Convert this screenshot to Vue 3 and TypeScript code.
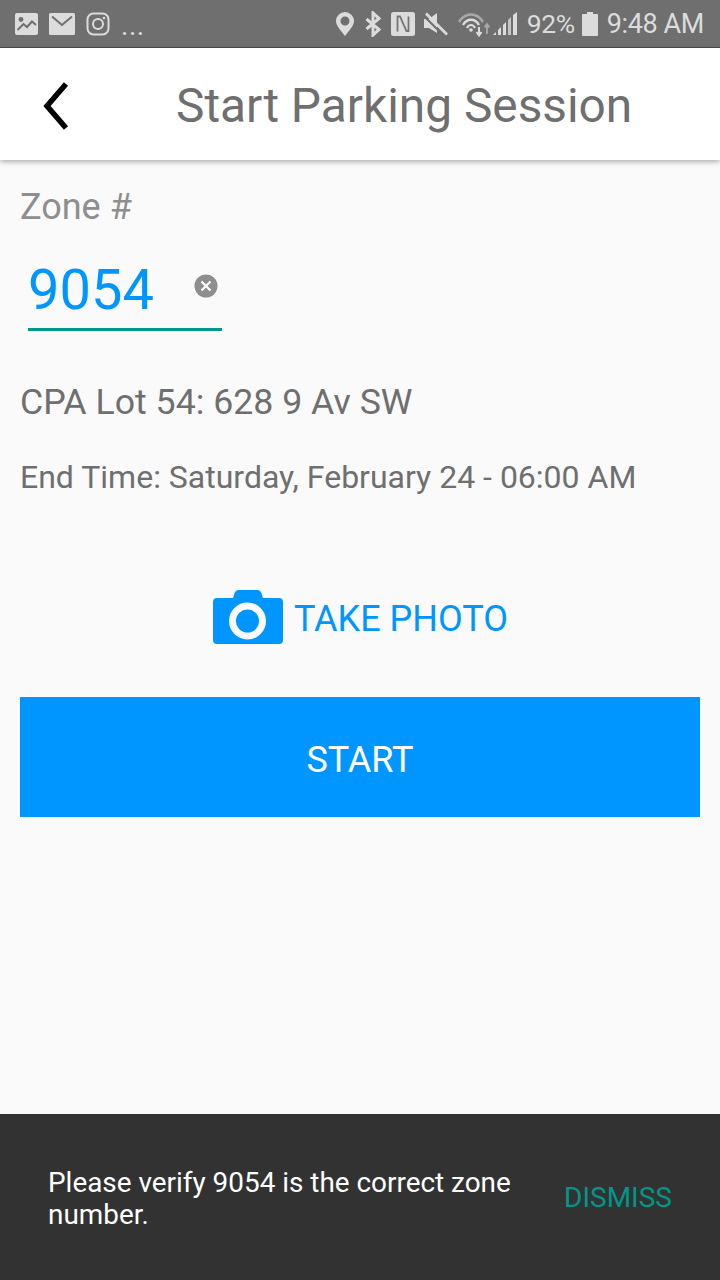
<template>
  <div class="screen">
    <div class="status-bar">
      <div class="status-left">
        <svg class="ic-img" width="26" height="24" viewBox="0 0 26 24">
          <rect x="1" y="1" width="23" height="22" rx="2" fill="#dcdcdc" />
          <circle cx="7" cy="7.500" r="2.400" fill="#6f6f6f" />
          <path d="M3.500 18 L9.500 12 L13 15 L18 9.500 L22 13" fill="none" stroke="#6f6f6f" stroke-width="2" />
        </svg>
        <svg class="ic-mail" width="27" height="24" viewBox="0 0 27 24">
          <rect x="1" y="1" width="26" height="22" rx="1.500" fill="#dcdcdc" />
          <path d="M4 4.500 L14 13 L24 4.500" fill="none" stroke="#6f6f6f" stroke-width="2" />
        </svg>
        <svg class="ic-insta" width="24" height="24" viewBox="0 0 24 24">
          <rect x="1.500" y="1.500" width="21" height="21" rx="6" fill="none" stroke="#dcdcdc" stroke-width="2" />
          <circle cx="12" cy="12" r="5" fill="none" stroke="#dcdcdc" stroke-width="2" />
          <circle cx="18" cy="6" r="1.300" fill="#dcdcdc" />
        </svg>
        <span class="dots">...</span>
      </div>
      <div class="status-right">
        <svg class="ic-pin" width="18" height="24" viewBox="0 0 18 24">
          <path fill-rule="evenodd" d="M9 0a9 9 0 0 1 9 9c0 5-5.500 10-9 15-3.500-5-9-10-9-15a9 9 0 0 1 9-9zm0 4.500a4.500 4.500 0 1 0 0 9 4.500 4.500 0 0 0 0-9z" fill="#dcdcdc" />
        </svg>
        <svg class="ic-bt" width="18" height="26" viewBox="0 0 18 26">
          <path d="M2.500 8 L15 18.500 L9 24 V2 L15 7.500 L2.500 18" fill="none" stroke="#dcdcdc" stroke-width="3" />
        </svg>
        <svg class="ic-nfc" width="24" height="24" viewBox="0 0 24 24">
          <rect x="0" y="0" width="24" height="24" rx="2.500" fill="#dcdcdc" />
          <path d="M6.500 19.500 V4.500 H9 L15.500 19 H17.500 V4.500" fill="none" stroke="#757575" stroke-width="1.800" />
        </svg>
        <svg class="ic-mute" width="24" height="24" viewBox="0 0 24 24">
          <path d="M0 7 H5 L13 1 V21 L5 16 H0 Z" fill="#dcdcdc" />
          <path d="M0 4 L19 23" stroke="#6f6f6f" stroke-width="2" />
          <path d="M2 1.500 L23 22.500" stroke="#dcdcdc" stroke-width="2.600" />
        </svg>
        <svg class="ic-wifi" width="32" height="26" viewBox="0 0 32 26">
          <path d="M1 11 C7 1 19 1 25 11" fill="none" stroke="#a9a9a9" stroke-width="2.600" />
          <path d="M5 14 C9 7 17 7 21 14" fill="none" stroke="#dcdcdc" stroke-width="2.400" />
          <path d="M9 17 C11 13 15 13 17 17" fill="none" stroke="#dcdcdc" stroke-width="2.200" />
          <circle cx="13" cy="19" r="1.800" fill="#dcdcdc" />
          <path d="M21 16 V24 M18.500 21 L21 24.500 L23.500 21" fill="none" stroke="#dcdcdc" stroke-width="2" />
          <path d="M29 23 V14 M26.500 16.500 L29 13 L31.500 16.500" fill="none" stroke="#a9a9a9" stroke-width="1.800" />
        </svg>
        <svg class="ic-signal" width="25" height="24" viewBox="0 0 25 24">
          <path d="M0 23 L3 20 V23 Z" fill="#dcdcdc" />
          <path d="M5 18 L8 15 V23 H5 Z" fill="#dcdcdc" />
          <path d="M10 13 L13 10 V23 H10 Z" fill="#dcdcdc" />
          <path d="M15 8 L18 5 V23 H15 Z" fill="#c4c4c4" />
          <path d="M20 3 L24 0 V23 H20 Z" fill="#dcdcdc" />
        </svg>
        <span class="pct">92%</span>
        <svg class="ic-batt" width="16" height="24" viewBox="0 0 16 24">
          <path d="M5 0 H11 V2 H15 a1 1 0 0 1 1 1 V23 a1 1 0 0 1-1 1 H1 a1 1 0 0 1-1-1 V3 a1 1 0 0 1 1-1 H5 Z" fill="#dcdcdc" />
        </svg>
        <span class="time">9:48 AM</span>
      </div>
    </div>

    <header class="app-bar">
      <svg class="back" width="30" height="50" viewBox="0 0 30 50">
        <path d="M26 3 L7 25 L26 47" fill="none" stroke="#000" stroke-width="5.500" />
      </svg>
      <h1 class="title">Start Parking Session</h1>
    </header>

    <main class="content">
      <div class="zone-label">Zone #</div>
      <div class="zone-input">
        <span class="zone-value">9054</span>
        <svg class="clear" width="24" height="24" viewBox="0 0 24 24">
          <circle cx="12" cy="12" r="11.500" fill="#8e8e8e" />
          <path d="M7.500 7.500 L16.500 16.500 M16.500 7.500 L7.500 16.500" stroke="#fff" stroke-width="2.200" />
        </svg>
      </div>
      <div class="lot">CPA Lot 54: 628 9 Av SW</div>
      <div class="end-time">End Time: Saturday, February 24 - 06:00 AM</div>
      <div class="photo">
        <svg width="72" height="56" viewBox="0 0 72 56">
          <path d="M22 6 Q23 1 27 1 H45 Q49 1 50 6 L51 9 H67 Q71 9 71 13 V51 Q71 55 67 55 H5 Q1 55 1 51 V13 Q1 9 5 9 H21 Z" fill="#0096ff" />
          <circle cx="35.500" cy="32" r="15" fill="#0096ff" stroke="#fafafa" stroke-width="7" />
        </svg>
        <span class="photo-text">TAKE PHOTO</span>
      </div>
      <button class="start">START</button>
    </main>

    <footer class="snackbar">
      <p class="snack-text">Please verify 9054 is the correct zone number.</p>
      <span class="dismiss">DISMISS</span>
    </footer>
  </div>
</template>

<script setup lang="ts">
</script>

<style>
html, body { margin: 0; padding: 0; }
</style>

<style scoped>
.screen {
  width: 720px;
  height: 1280px;
  display: flex;
  flex-direction: column;
  background: #fafafa;
  font-family: Roboto, "Liberation Sans", sans-serif;
  overflow: hidden;
}
.status-bar {
  height: 48px;
  box-sizing: border-box;
  border-bottom: 1px solid #4a4a4a;
  background: #6f6f6f;
  display: flex;
  justify-content: space-between;
  align-items: center;
  padding: 0 16px 0 14px;
  color: #dcdcdc;
  flex: none;
}
.status-left, .status-right { display: flex; align-items: center; }
.ic-img { margin-right: 8px; }
.ic-mail { margin-right: 11px; }
.dots { font-size: 28px; line-height: 24px; margin-left: 11px; letter-spacing: 0.5px; position: relative; top: 2px; }
.ic-pin { margin-right: 10px; }
.ic-bt { margin-right: 9px; }
.ic-nfc { margin-right: 9px; }
.ic-mute { margin-right: 10px; }
.ic-wifi { margin-right: 3px; }
.ic-signal { margin-right: 9px; }
.ic-batt { margin: 0 9px 0 7px; }
.pct, .time { font-size: 27px; line-height: 32px; letter-spacing: -0.4px; }
.pct { font-size: 26.500px; }
.app-bar {
  height: 112px;
  flex: none;
  box-sizing: border-box;
  padding: 3px 0 0 40px;
  background: #fff;
  box-shadow: 0 2px 5px rgba(0, 0, 0, 0.3);
  display: flex;
  align-items: center;
  position: relative;
  z-index: 1;
}
.back { flex: none; }
.title {
  margin: 0 0 0 106px;
  font-size: 47.800px;
  font-weight: 400;
  color: #6f6f6f;
  white-space: nowrap;
}
.content {
  flex: 1;
  padding: 0 20px;
  display: flex;
  flex-direction: column;
}
.zone-label { margin-top: 27px; font-size: 36px; line-height: 40px; color: #8e8e8e; }
.zone-input {
  margin: 28px 0 0 8px;
  width: 194px;
  height: 76px;
  box-sizing: border-box;
  border-bottom: 3px solid #009688;
  display: flex;
  align-items: center;
  justify-content: space-between;
  padding-bottom: 4px;
  color: #0096ff;
}
.zone-value { font-size: 56px; line-height: 60px; }
.clear { margin-right: 4px; position: relative; top: -4px; }
.lot { margin-top: 51px; font-size: 35.700px; line-height: 40px; color: #6f6f6f; }
.end-time { margin-top: 35px; font-size: 32px; line-height: 40px; color: #6f6f6f; white-space: nowrap; }
.photo {
  margin-top: 92px;
  display: flex;
  justify-content: center;
  align-items: center;
  gap: 10px;
  height: 56px;
}
.photo-text { font-size: 36px; color: #0096ff; position: relative; top: 2px; }
.start {
  margin-top: 52px;
  height: 120px;
  border: 0;
  padding: 6px 0 0;
  background: #0096ff;
  color: #fff;
  font-family: inherit;
  font-size: 36px;
}
.snackbar {
  height: 166px;
  flex: none;
  background: #323232;
  box-sizing: border-box;
  padding: 0 48px;
  display: flex;
  align-items: center;
  justify-content: space-between;
}
.snack-text { margin: 4px 0 0; width: 480px; font-size: 27.900px; line-height: 32px; color: #fff; }
.dismiss { font-size: 28px; color: #009688; }
</style>
